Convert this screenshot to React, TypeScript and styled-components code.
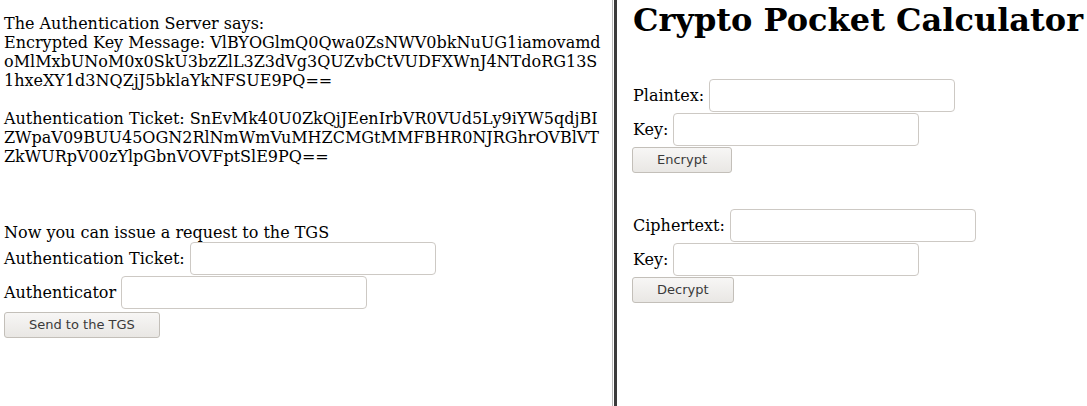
import React from "react";
import styled, { createGlobalStyle } from "styled-components";

const GlobalStyle = createGlobalStyle`
  html, body {
    margin: 0;
    padding: 0;
    background: #ffffff;
  }
  body {
    font-family: "DejaVu Serif", "Liberation Serif", serif;
    font-size: 16px;
    color: #000000;
  }
`;

const Frameset = styled.div`
  display: flex;
  width: 1087px;
  height: 406px;
  overflow: hidden;
  background: #ffffff;
`;

const Frame = styled.div<{ $width?: number; $padTop: number; $padLeft: number }>`
  ${(p) => (p.$width ? `width: ${p.$width}px; flex: none;` : "flex: 1;")}
  box-sizing: border-box;
  padding: ${(p) => p.$padTop}px 0 0 ${(p) => p.$padLeft}px;
  display: flex;
  flex-direction: column;
  align-items: flex-start;
  font-family: "DejaVu Serif", "Liberation Serif", serif;
  font-size: 16px;
  line-height: 19px;
  overflow: hidden;
`;

const Divider = styled.div`
  flex: none;
  width: 5px;
  height: 100%;
  display: flex;
  gap: 1px;
  background: #ffffff;
`;

const DividerLine = styled.div<{ $w: number; $color: string }>`
  width: ${(p) => p.$w}px;
  height: 100%;
  background: ${(p) => p.$color};
`;

const TextBlock = styled.div<{ $after: number }>`
  margin-bottom: ${(p) => p.$after}px;
  white-space: nowrap;
`;

const Heading = styled.h1`
  margin: 0 0 40px 0;
  font-family: "DejaVu Serif", "Liberation Serif", serif;
  font-weight: bold;
  font-size: 32px;
  line-height: 37px;
  white-space: nowrap;
`;

const FieldRow = styled.div`
  display: flex;
  align-items: center;
  gap: 5px;
  height: 33px;
  margin-bottom: 1px;
  white-space: nowrap;
`;

const TextInput = styled.input`
  box-sizing: border-box;
  width: 246px;
  height: 33px;
  margin: 0;
  padding: 0 6px;
  border: 1px solid #cdc9c4;
  border-radius: 4px;
  background: #ffffff;
  font-family: "DejaVu Sans", sans-serif;
  font-size: 13px;
  outline: none;
`;

const Button = styled.button<{ $top?: number; $after?: number; $left?: number }>`
  box-sizing: border-box;
  height: 26px;
  margin: ${(p) => p.$top ?? 0}px 0 ${(p) => p.$after ?? 0}px ${(p) => p.$left ?? 0}px;
  padding: 0 24px;
  border: 1px solid #c3bfb9;
  border-radius: 3px;
  background: linear-gradient(#f7f6f5, #e9e7e4);
  color: #3a3a3a;
  font-family: "DejaVu Sans", "Noto Sans", sans-serif;
  font-size: 13px;
  line-height: 24px;
  cursor: pointer;
`;

export default function App() {
  return (
    <>
      <GlobalStyle />
      <Frameset>
        <Frame $width={612} $padTop={14} $padLeft={4}>
          <TextBlock $after={19}>
            The Authentication Server says:
            <br />
            Encrypted Key Message: VlBYOGlmQ0Qwa0ZsNWV0bkNuUG1iamovamd
            <br />
            oMlMxbUNoM0x0SkU3bzZlL3Z3dVg3QUZvbCtVUDFXWnJ4NTdoRG13S
            <br />
            1hxeXY1d3NQZjJ5bklaYkNFSUE9PQ==
          </TextBlock>
          <TextBlock $after={57}>
            Authentication Ticket: SnEvMk40U0ZkQjJEenIrbVR0VUd5Ly9iYW5qdjBI
            <br />
            ZWpaV09BUU45OGN2RlNmWmVuMHZCMGtMMFBHR0NJRGhrOVBlVT
            <br />
            ZkWURpV00zYlpGbnVOVFptSlE9PQ==
          </TextBlock>
          <TextBlock $after={0}>Now you can issue a request to the TGS</TextBlock>
          <FieldRow>
            Authentication Ticket:
            <TextInput type="text" />
          </FieldRow>
          <FieldRow>
            Authenticator
            <TextInput type="text" />
          </FieldRow>
          <Button $top={2}>Send to the TGS</Button>
        </Frame>
        <Divider>
          <DividerLine $w={1} $color="#b9b9b9" />
          <DividerLine $w={3} $color="#3b3b3b" />
        </Divider>
        <Frame $padTop={2} $padLeft={16}>
          <Heading>Crypto Pocket Calculator</Heading>
          <FieldRow>
            Plaintex:
            <TextInput type="text" />
          </FieldRow>
          <FieldRow>
            Key:
            <TextInput type="text" />
          </FieldRow>
          <Button $left={-1} $after={36}>Encrypt</Button>
          <FieldRow>
            Ciphertext:
            <TextInput type="text" />
          </FieldRow>
          <FieldRow>
            Key:
            <TextInput type="text" />
          </FieldRow>
          <Button $left={-1}>Decrypt</Button>
        </Frame>
      </Frameset>
    </>
  );
}
